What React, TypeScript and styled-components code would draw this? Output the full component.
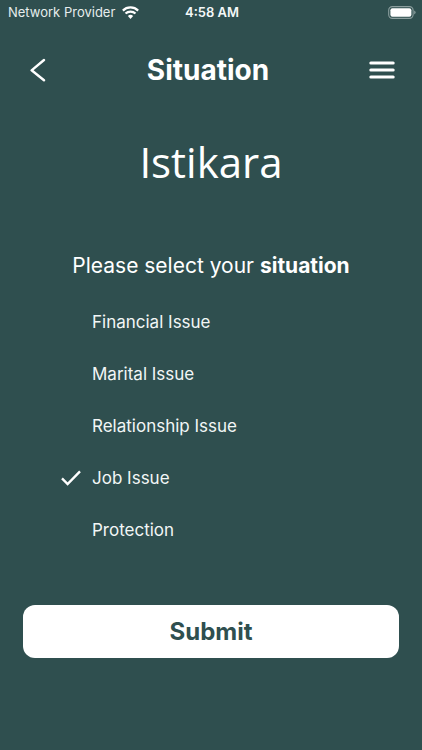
import React, { useState } from "react";
import styled, { createGlobalStyle } from "styled-components";

const slate = "#2f4f4f";

const GlobalStyle = createGlobalStyle`
  *, *::before, *::after { box-sizing: border-box; }
  body {
    margin: 0;
    background: ${slate};
    color: #fff;
    font-family: Inter, "Liberation Sans", sans-serif;
  }
`;

const Screen = styled.div`
  display: flex;
  flex-direction: column;
  min-height: 100vh;
  background: ${slate};
`;

const StatusBar = styled.div`
  display: grid;
  grid-template-columns: 1fr auto 1fr;
  align-items: center;
  height: 24px;
  padding: 0 6px 0 8px;
  font-size: 13px;
  line-height: 16px;
`;

const Carrier = styled.span`
  display: flex;
  align-items: center;
  gap: 7px;
  white-space: nowrap;
  color: #e6eded;
`;

const Clock = styled.time`
  font-weight: 600;
  color: #f4f8f8;
`;

const BatteryIcon = styled.svg`
  justify-self: end;
`;

const Header = styled.header`
  display: grid;
  grid-template-columns: 40px 1fr 48px;
  align-items: center;
  height: 48px;
  margin-top: 22px;
  padding: 0 16px 0 18px;
`;

const Title = styled.h1`
  margin: 0;
  text-align: center;
  font-size: 28px;
  line-height: 36px;
  font-weight: 700;
`;

const IconButton = styled.button`
  display: grid;
  place-items: center;
  height: 40px;
  padding: 0;
  border: 0;
  background: none;
  color: inherit;
  cursor: pointer;
`;

const Brand = styled.p`
  margin: 40px 0 0;
  text-align: center;
  font-family: "Open Sans", "Noto Sans", sans-serif;
  font-size: 42px;
  line-height: 56px;
`;

const Form = styled.form`
  display: flex;
  flex-direction: column;
`;

const Choices = styled.fieldset`
  margin: 0;
  padding: 0;
  border: 0;
`;

const Prompt = styled.legend`
  width: 100%;
  padding: 60px 0 14px;
  text-align: center;
  font-size: 21px;
  line-height: 32px;
`;

const Choice = styled.label`
  display: grid;
  grid-template-columns: 20px 1fr;
  align-items: center;
  column-gap: 11px;
  height: 52px;
  padding: 0 61px;
  font-size: 17px;
  line-height: 24px;
  color: #f2f6f6;
  cursor: pointer;
`;

const Mark = styled.span`
  display: grid;
  place-items: center;
  & > * { grid-area: 1 / 1; }
`;

const Radio = styled.input`
  appearance: none;
  width: 20px;
  height: 20px;
  margin: 0;
  cursor: pointer;
`;

const Tick = styled.svg`
  pointer-events: none;
`;

const Submit = styled.button`
  height: 53px;
  margin: 49px 23px 24px;
  border: 0;
  border-radius: 12px;
  background: #fff;
  color: ${slate};
  font-family: inherit;
  font-size: 24px;
  line-height: 32px;
  font-weight: 700;
  cursor: pointer;
`;

const situations = [
  "Financial Issue",
  "Marital Issue",
  "Relationship Issue",
  "Job Issue",
  "Protection",
];

export default function App() {
  const [selected, setSelected] = useState("Job Issue");

  return (
    <>
      <GlobalStyle />
      <Screen>
        <StatusBar>
          <Carrier>
            Network Provider
            <svg width="17" height="13" viewBox="0 0 16 12" fill="none" stroke="#fff" strokeWidth="2.1" aria-hidden="true">
              <path d="M0.8 4.2a10.3 10.3 0 0 1 14.4 0" />
              <path d="M3.3 7a6.7 6.7 0 0 1 9.4 0" />
              <path d="M8 12 5.5 9.4a3.6 3.6 0 0 1 5 0z" fill="#fff" stroke="none" />
            </svg>
          </Carrier>
          <Clock>4:58 AM</Clock>
          <BatteryIcon width="28" height="13" viewBox="0 0 28 13" role="img" aria-label="Battery full">
            <rect x="0.7" y="0.6" width="24.4" height="11.8" rx="3.6" fill="none" stroke="#8b9e9e" strokeWidth="1.1" />
            <rect x="2.4" y="2.3" width="21" height="8.4" rx="2" fill="#fff" />
            <path d="M26.2 4.6v3.8q1.4-.6 1.4-1.9t-1.4-1.9z" fill="#8b9e9e" />
          </BatteryIcon>
        </StatusBar>

        <Header>
          <IconButton type="button" aria-label="Back">
            <svg width="16" height="24" viewBox="0 0 16 24" fill="none" stroke="#fff" strokeWidth="2.4" strokeLinecap="round" strokeLinejoin="round" aria-hidden="true">
              <path d="M14 2 1.6 12.3 14 22.3" />
            </svg>
          </IconButton>
          <Title>Situation</Title>
          <IconButton type="button" aria-label="Menu">
            <svg width="26" height="18" viewBox="0 0 26 18" fill="none" stroke="#fff" strokeWidth="3" strokeLinecap="round" aria-hidden="true">
              <path d="M1.8 2h22.4M1.8 9h22.4M1.8 16h22.4" />
            </svg>
          </IconButton>
        </Header>

        <Brand>Istikara</Brand>

        <Form onSubmit={(e) => e.preventDefault()}>
          <Choices>
            <Prompt>
              Please select your <strong>situation</strong>
            </Prompt>
            {situations.map((name) => (
              <Choice key={name}>
                <Mark>
                  <Radio
                    type="radio"
                    name="situation"
                    value={name}
                    checked={selected === name}
                    onChange={() => setSelected(name)}
                  />
                  {selected === name && (
                    <Tick width="20" height="16" viewBox="0 0 20 16" fill="none" stroke="#fff" strokeWidth="2.4" aria-hidden="true">
                      <path d="M1 8.4 6.6 14 19 1.4" />
                    </Tick>
                  )}
                </Mark>
                {name}
              </Choice>
            ))}
          </Choices>
          <Submit type="submit">Submit</Submit>
        </Form>
      </Screen>
    </>
  );
}
